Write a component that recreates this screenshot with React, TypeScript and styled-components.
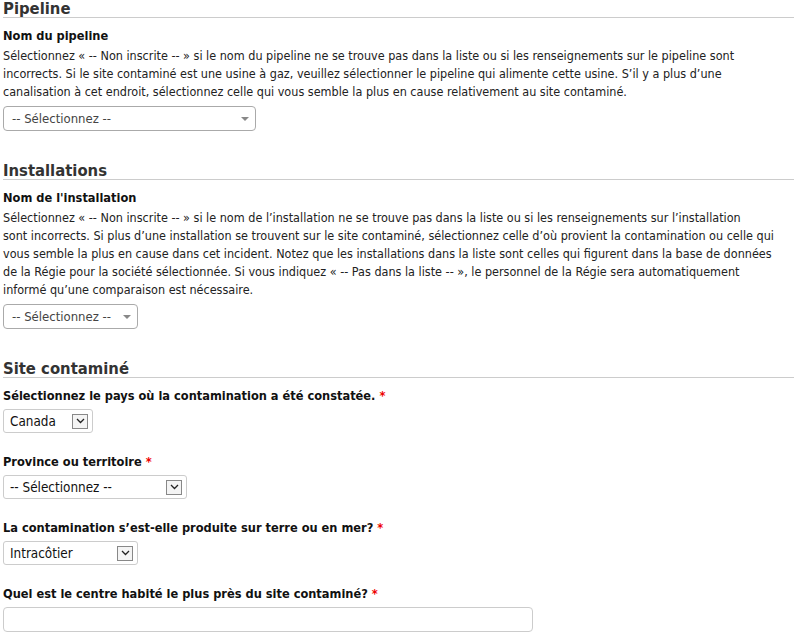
import { Fragment } from "react";
import styled, { createGlobalStyle } from "styled-components";

const GlobalStyle = createGlobalStyle`
  body {
    margin: 0;
    background: #fff;
    font-family: "DejaVu Sans Condensed", "DejaVu Sans", sans-serif;
    font-size: 12.7px;
    color: #222;
  }
`;

const pipelineHelp = [
  "Sélectionnez « -- Non inscrite -- » si le nom du pipeline ne se trouve pas dans la liste ou si les renseignements sur le pipeline sont",
  "incorrects. Si le site contaminé est une usine à gaz, veuillez sélectionner le pipeline qui alimente cette usine. S’il y a plus d’une",
  "canalisation à cet endroit, sélectionnez celle qui vous semble la plus en cause relativement au site contaminé.",
];

const installHelp = [
  "Sélectionnez « -- Non inscrite -- » si le nom de l’installation ne se trouve pas dans la liste ou si les renseignements sur l’installation",
  "sont incorrects. Si plus d’une installation se trouvent sur le site contaminé, sélectionnez celle d’où provient la contamination ou celle qui",
  "vous semble la plus en cause dans cet incident. Notez que les installations dans la liste sont celles qui figurent dans la base de données",
  "de la Régie pour la société sélectionnée. Si vous indiquez « -- Pas dans la liste -- », le personnel de la Régie sera automatiquement",
  "informé qu’une comparaison est nécessaire.",
];

type FieldProps = {
  label: string;
  required?: boolean;
  help?: string[];
  children: React.ReactNode;
};

function Field({ label, required, help, children }: FieldProps) {
  return (
    <FieldWrap>
      <Label $tight={!!help}>
        {label}
        {required && <Star> *</Star>}
      </Label>
      {help && (
        <Help>
          {help.map((line, i) => (
            <Fragment key={i}>
              {i > 0 && <br />}
              {line}
            </Fragment>
          ))}
        </Help>
      )}
      {children}
    </FieldWrap>
  );
}

function FancySelect({ width, value }: { width: number; value: string }) {
  return (
    <Fancy $width={width}>
      <span>{value}</span>
      <Caret />
    </Fancy>
  );
}

function PlainSelect({ width, value }: { width: number; value: string }) {
  return (
    <Plain $width={width}>
      <span>{value}</span>
      <ArrowBox>
        <svg width="9" height="6" viewBox="0 0 9 6">
          <path d="M1 1l3.5 3.5L8 1" fill="none" stroke="#222" strokeWidth="1.3" />
        </svg>
      </ArrowBox>
    </Plain>
  );
}

export default function App() {
  return (
    <>
      <GlobalStyle />
      <Page>
        <Section>
          <Heading>Pipeline</Heading>
          <Field label="Nom du pipeline" help={pipelineHelp}>
            <FancySelect width={253} value="-- Sélectionnez --" />
          </Field>
        </Section>

        <Section>
          <Heading>Installations</Heading>
          <Field label="Nom de l'installation" help={installHelp}>
            <FancySelect width={135} value="-- Sélectionnez --" />
          </Field>
        </Section>

        <Section>
          <Heading>Site contaminé</Heading>
          <Field label="Sélectionnez le pays où la contamination a été constatée." required>
            <PlainSelect width={90} value="Canada" />
          </Field>
          <Field label="Province ou territoire" required>
            <PlainSelect width={184} value="-- Sélectionnez --" />
          </Field>
          <Field label="La contamination s’est-elle produite sur terre ou en mer?" required>
            <PlainSelect width={135} value="Intracôtier" />
          </Field>
          <Field label="Quel est le centre habité le plus près du site contaminé?" required>
            <TextInput type="text" />
          </Field>
        </Section>
      </Page>
    </>
  );
}

const Page = styled.div`
  padding: 0 9px 0 3px;
  display: flex;
  flex-direction: column;
  gap: 11px;
`;

const Section = styled.section`
  display: flex;
  flex-direction: column;
`;

const Heading = styled.h2`
  margin: 0 0 9px;
  font-size: 16.5px;
  font-weight: bold;
  color: #333;
  line-height: 17px;
  border-bottom: 1px solid #ccc;
`;

const FieldWrap = styled.div`
  display: flex;
  flex-direction: column;
  align-items: flex-start;
  margin-bottom: 20px;
`;

const Label = styled.div<{ $tight: boolean }>`
  font-weight: bold;
  color: #111;
  line-height: 18px;
  margin-bottom: ${(p) => (p.$tight ? 2 : 4)}px;
`;

const Star = styled.span`
  color: #e00;
`;

const Help = styled.p`
  margin: 0 0 5px;
  font-size: 12.5px;
  line-height: 18px;
  white-space: nowrap;
  color: #222;
`;

const Fancy = styled.div<{ $width: number }>`
  box-sizing: border-box;
  width: ${(p) => p.$width}px;
  height: 25px;
  border: 1px solid #aaa;
  border-radius: 4px;
  display: flex;
  align-items: center;
  justify-content: space-between;
  padding: 0 6px 0 8px;
  font-size: 13px;
  color: #444;
`;

const Caret = styled.span`
  width: 0;
  height: 0;
  border-left: 4px solid transparent;
  border-right: 4px solid transparent;
  border-top: 4px solid #888;
`;

const Plain = styled.div<{ $width: number }>`
  box-sizing: border-box;
  width: ${(p) => p.$width}px;
  height: 24px;
  border: 1px solid #ccc;
  border-radius: 3px;
  display: flex;
  align-items: center;
  justify-content: space-between;
  padding: 0 4px 0 6px;
  font-size: 13.4px;
  color: #111;
`;

const ArrowBox = styled.span`
  box-sizing: border-box;
  width: 16px;
  height: 15px;
  border: 1px solid #888;
  background: #f4f4f4;
  display: flex;
  align-items: center;
  justify-content: center;
`;

const TextInput = styled.input`
  box-sizing: border-box;
  width: 530px;
  height: 25px;
  border: 1px solid #ccc;
  border-radius: 4px;
  font: inherit;
  padding: 0 6px;
  margin: 0;
`;
